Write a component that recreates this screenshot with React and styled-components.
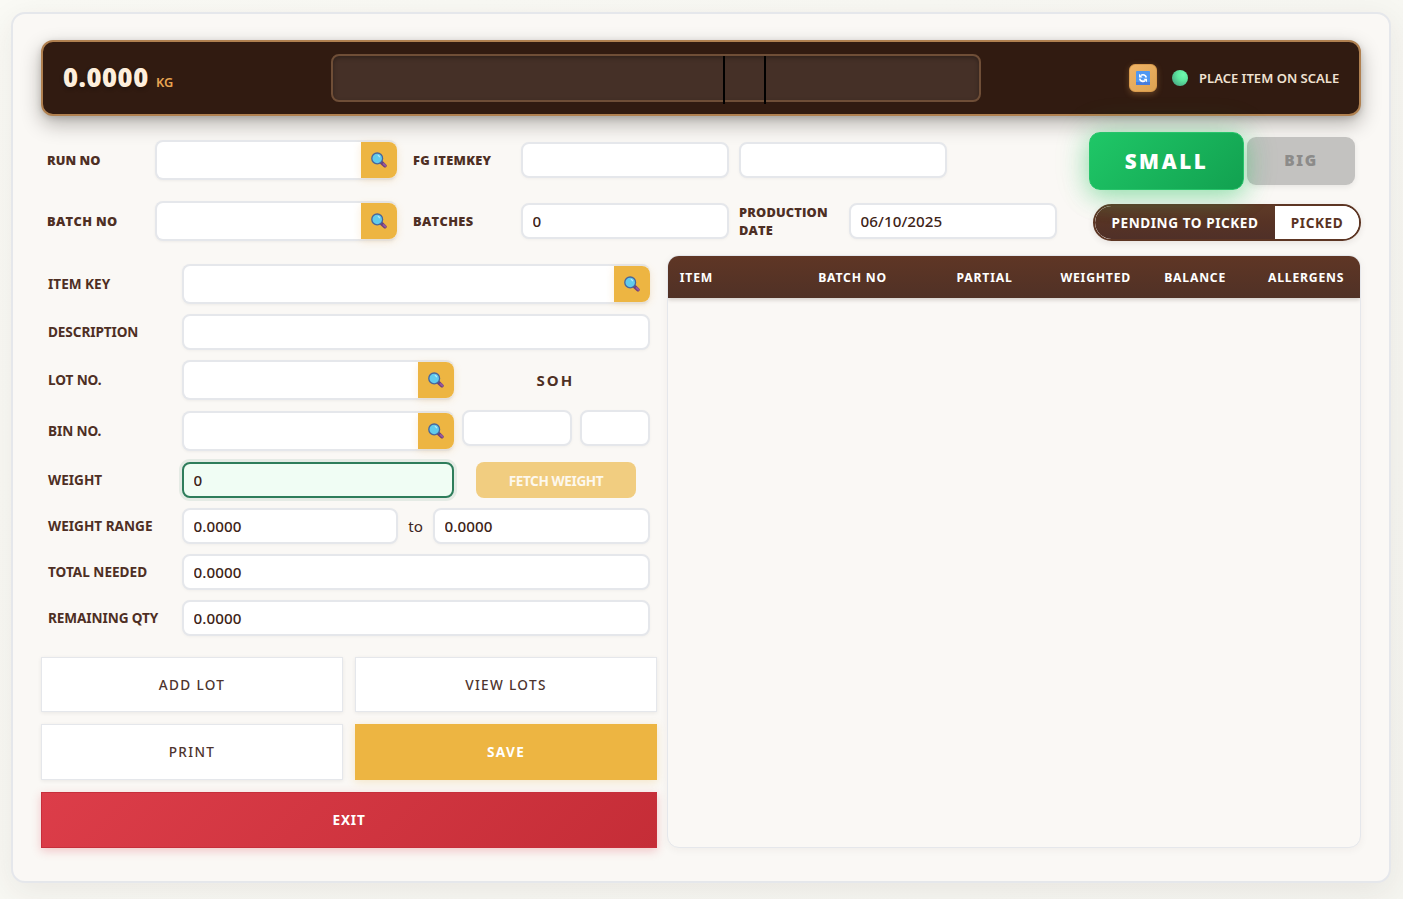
import React from "react";
import styled, { createGlobalStyle, css } from "styled-components";

const Global = createGlobalStyle`
  * { box-sizing: border-box; }
  body {
    margin: 0;
    min-height: 899px;
    overflow: hidden;
    font-family: "Noto Sans", "Open Sans", sans-serif;
    color: #3e2723;
    background: linear-gradient(135deg, #fafaf5 0%, #f5f5f0 100%);
  }
  button, input { font-family: inherit; }
`;

const Card = styled.main`
  width: 1380px;
  height: 871px;
  margin: 12px 12px 16px 11px;
  padding: 26px 28px;
  border: 2px solid #e5e7eb;
  border-radius: 14px;
  background: #faf8f5;
  box-shadow: 0 8px 32px rgba(62, 39, 35, 0.08);
  display: flex;
  flex-direction: column;
`;

const ScaleHeader = styled.header`
  flex: none;
  height: 76px;
  padding: 0 20px;
  border: 2px solid #b08050;
  border-radius: 12px;
  background: #311b11;
  box-shadow: 0 8px 20px rgba(20, 12, 8, 0.3), 0 2px 6px rgba(20, 12, 8, 0.15);
  display: flex;
  align-items: center;
`;

const Reading = styled.div`
  width: 268px;
  display: flex;
  align-items: baseline;
  gap: 8px;
`;

const ReadingValue = styled.span`
  width: 85px;
  font-family: "Open Sans", "Noto Sans", sans-serif;
  font-size: 25.6px;
  line-height: 32px;
  font-weight: 800;
  letter-spacing: 0.55px;
  color: #fdeedc;
  text-shadow: 0 2px 4px rgba(0, 0, 0, 0.3);
`;

const ReadingUnit = styled.span`
  font-size: 12.8px;
  font-weight: 600;
  color: #e9a552;
`;

const Meter = styled.div`
  position: relative;
  width: 650px;
  height: 48px;
  border: 2px solid #6f4e37;
  border-radius: 8px;
  background: #453027;
  box-shadow: inset 0 2px 4px rgba(0, 0, 0, 0.3);
`;

const Marker = styled.i`
  position: absolute;
  top: 0;
  left: ${(p) => p.$left}px;
  width: 2px;
  height: 48px;
  background: #000;
`;

const Status = styled.div`
  margin-left: auto;
  display: flex;
  align-items: center;
`;

const RefreshButton = styled.button`
  width: 28px;
  height: 28px;
  padding: 0;
  border: 1px solid #d99b4d;
  border-radius: 6px;
  background: linear-gradient(135deg, #f0b467, #dca352);
  box-shadow: 0 2px 6px rgba(233, 165, 82, 0.3);
  display: grid;
  place-items: center;
`;

const Dot = styled.span`
  width: 16px;
  height: 16px;
  margin: 0 11px 0 15px;
  border-radius: 50%;
  background: radial-gradient(circle at 70% 30%, #6ffbae 0%, #5ee9a0 35%, #41927a 100%);
`;

const StatusText = styled.span`
  width: 140px;
  font-size: 13px;
  font-weight: 600;
  color: #f0e2d2;
  letter-spacing: 0.02px;
  white-space: nowrap;
`;

const RunSection = styled.section`
  flex: none;
  height: 101px;
  margin-top: 24px;
  padding-left: 6px;
  display: flex;
  justify-content: space-between;
`;

const RunRows = styled.div`
  display: flex;
  flex-direction: column;
  gap: 21px;
`;

const RunRow = styled.div`
  height: 40px;
  display: flex;
  align-items: center;
`;

const RunLabel = styled.label`
  width: ${(p) => p.$w || 108}px;
  margin-left: ${(p) => p.$gap || 0}px;
  padding-bottom: 1px;
  font-family: "Open Sans", "Noto Sans", sans-serif;
  font-size: 12.8px;
  line-height: 18px;
  font-weight: 800;
  letter-spacing: ${(p) => p.$ls}px;
  color: #4e2f24;
`;

const Input = styled.input`
  flex: none;
  width: ${(p) => p.$w}px;
  height: 36px;
  margin-left: ${(p) => p.$gap || 0}px;
  padding: 0 10px 0 9.6px;
  border: 2px solid #e5e7eb;
  border-radius: 8px;
  outline: none;
  background: #fff;
  box-shadow: 0 1px 3px rgba(0, 0, 0, 0.04);
  font-size: 15.2px;
  font-weight: 500;
  letter-spacing: 0.05px;
  color: #3e2417;
  ${(p) => p.$active && css`
    border-color: #2e7d5b;
    background: #f0fdf4;
    box-shadow: 0 0 0 3px rgba(46, 125, 91, 0.1);
  `}
`;

const LookupBox = styled.div`
  flex: none;
  width: ${(p) => p.$w}px;
  height: 40px;
  border: 2px solid #e5e7eb;
  border-right: 0;
  border-radius: 8px;
  background: #fff;
  box-shadow: 0 1px 3px rgba(0, 0, 0, 0.05);
  display: flex;
`;

const LookupInput = styled.input`
  flex: 1;
  min-width: 0;
  padding: 0 10px;
  border: 0;
  border-radius: 8px;
  outline: none;
  background: transparent;
`;

const LookupButton = styled.button`
  flex: none;
  width: 36px;
  height: 36px;
  padding: 0 1px 1px 0;
  border: 0;
  border-radius: 0 8px 8px 0;
  background: #edb542;
  box-shadow: 0 2px 8px rgba(237, 165, 66, 0.2);
  display: grid;
  place-items: center;
`;

const Controls = styled.div`
  display: flex;
  flex-direction: column;
  justify-content: space-between;
  align-items: flex-end;
`;

const SizeRow = styled.div`
  height: 41px;
  padding-right: 6px;
  display: flex;
  align-items: center;
  gap: 3px;
`;

const SizeButton = styled.button`
  flex: none;
  padding: 0;
  border: 2px solid transparent;
  ${(p) => p.$active ? css`
    position: relative;
    width: 155px;
    height: 58px;
    border: 1px solid #28c46b;
    border-radius: 11px;
    background: linear-gradient(135deg, #1fc767, #12a150);
    box-shadow: 0 6px 24px rgba(34, 197, 94, 0.4), 0 0 36px rgba(34, 197, 94, 0.2);
    font-size: 20.6px;
    font-weight: 900;
    letter-spacing: 2.6px;
    color: #fff;
  ` : css`
    width: 108px;
    height: 48px;
    padding-bottom: 1px;
    border-radius: 9px;
    background: #c3c2c0;
    box-shadow: 0 2px 6px rgba(0, 0, 0, 0.08);
    font-size: 15.5px;
    font-weight: 900;
    letter-spacing: 1.6px;
    color: #8c8b8a;
  `}
`;

const Toggle = styled.div`
  width: 268px;
  height: 37px;
  border: 2px solid #5d3624;
  border-radius: 19px;
  overflow: hidden;
  background: #fff;
  box-shadow: 0 2px 6px rgba(62, 39, 35, 0.1);
  display: flex;
`;

const ToggleOption = styled.button`
  width: ${(p) => p.$w}px;
  padding: 0;
  border: 0;
  font-size: 13.6px;
  font-weight: 700;
  letter-spacing: 0.55px;
  color: ${(p) => (p.$active ? "#fff" : "#5a3323")};
  background: ${(p) => (p.$active ? "linear-gradient(180deg, #5e3a27, #573325 50%, #4f3028)" : "#fff")};
  ${(p) => p.$active && "border-radius: 17px 0 0 17px;"}
`;

const Workspace = styled.section`
  margin-top: 14px;
  display: grid;
  grid-template-columns: 616px 694px;
  gap: 10px;
`;

const Form = styled.div`
  padding: 9px 7px 0;
  display: flex;
  flex-direction: column;
  gap: 10px;
`;

const FormRow = styled.div`
  height: ${(p) => p.$h || 36}px;
  display: flex;
  align-items: center;
`;

const FormLabel = styled.label`
  flex: none;
  width: 134px;
  padding-bottom: 1px;
  font-size: 13.6px;
  font-weight: 700;
  letter-spacing: ${(p) => p.$ls ?? 0}px;
  color: #4e2f24;
`;

const StockLabel = styled.span`
  margin-left: 82.5px;
  padding-bottom: 1px;
  font-size: 15px;
  font-weight: 700;
  letter-spacing: 2px;
  color: #4e2f24;
`;

const StockFields = styled.div`
  align-self: flex-start;
  display: flex;
`;

const FetchButton = styled.button`
  width: 160px;
  height: 36px;
  margin-left: 22px;
  padding: 1px 0 0;
  border: 0;
  border-radius: 8px;
  background: #f1cd80;
  font-size: 13.6px;
  font-weight: 700;
  letter-spacing: -0.4px;
  color: #fdf8ee;
`;

const RangeWord = styled.span`
  width: 35px;
  padding-bottom: 1px;
  text-align: center;
  font-size: 15.2px;
`;

const Actions = styled.div`
  margin-top: 21px;
  display: grid;
  grid-template-columns: 302px 302px;
  grid-template-rows: 55px 56px 56px;
  gap: 12px;
`;

const actionKinds = {
  plain: css`
    border: 1px solid #e5e7eb;
    background: #fff;
    color: #4e342e;
    font-weight: 500;
    box-shadow: 0 1px 4px rgba(0, 0, 0, 0.07);
  `,
  save: css`
    border: 0;
    background: #edb542;
    color: #fff;
    font-weight: 700;
    box-shadow: 0 2px 8px rgba(237, 181, 66, 0.25);
  `,
  exit: css`
    grid-column: 1 / 3;
    border: 1px solid #c62f3b;
    background: linear-gradient(135deg, #dc3d49, #c52d37);
    color: #fff;
    font-weight: 700;
    box-shadow: 0 3px 9px rgba(220, 53, 69, 0.25);
  `,
};

const ActionButton = styled.button`
  padding: 0 0 1px;
  font-size: 13.6px;
  letter-spacing: ${(p) => (p.$kind === "exit" ? 0.8 : 1.35)}px;
  ${(p) => actionKinds[p.$kind || "plain"]}
`;

const TablePanel = styled.div`
  height: 593px;
  border: 1px solid #e5e7eb;
  border-radius: 12px;
  overflow: hidden;
  background: #faf8f5;
  box-shadow: 0 2px 8px rgba(62, 39, 35, 0.05);
`;

const TableHead = styled.div`
  height: 42px;
  display: grid;
  grid-template-columns: 20% 20% 15% 15% 15% 15%;
  align-items: center;
  background: linear-gradient(180deg, #5f3625, #503126);
  box-shadow: 0 2px 4px rgba(62, 39, 35, 0.2);
`;

const HeadCell = styled.span`
  padding-left: 11.8px;
  font-size: 12.2px;
  font-weight: 700;
  letter-spacing: 0.8px;
  color: #fff;
  white-space: nowrap;
`;

const SearchIcon = () => (
  <svg width="16" height="16" viewBox="0 0 16 16">
    <path d="M10.6 10.6 13.9 13.7" stroke="#6d3f79" strokeWidth="3.6" strokeLinecap="round" />
    <path d="M12.6 12 14.3 13.6" stroke="#9558a0" strokeWidth="2" strokeLinecap="round" />
    <circle cx="6.2" cy="6.4" r="5.4" fill="#61cbec" stroke="#48659b" strokeWidth="1.3" />
    <path d="M7.2 3.6a3 3 0 0 1 1.4 1.2" fill="none" stroke="#b7eafa" strokeWidth="1.1" strokeLinecap="round" />
  </svg>
);

const RefreshIcon = () => (
  <svg width="14" height="14" viewBox="0 0 14 14">
    <rect width="14" height="14" rx="0.8" fill="#4f98f2" />
    <path d="M0 11h14v3H0z" fill="#467dde" />
    <path d="M5 4.3C7 3.2 9.8 3.8 10.3 6.5M9 9.8C7 10.9 4.2 10.3 3.7 7.6" fill="none" stroke="#fff" strokeWidth="1.7" />
    <path d="M3 2.8v3.6h3.6zM11 11.3V7.7H7.4z" fill="#fff" />
  </svg>
);

const Lookup = ({ width }) => (
  <LookupBox $w={width}>
    <LookupInput />
    <LookupButton><SearchIcon /></LookupButton>
  </LookupBox>
);

const columns = ["ITEM", "BATCH NO", "PARTIAL", "WEIGHTED", "BALANCE", "ALLERGENS"];

export default function App() {
  return (
    <>
      <Global />
      <Card>
        <ScaleHeader>
          <Reading>
            <ReadingValue>0.0000</ReadingValue>
            <ReadingUnit>KG</ReadingUnit>
          </Reading>
          <Meter>
            <Marker $left={390} />
            <Marker $left={431} />
          </Meter>
          <Status>
            <RefreshButton><RefreshIcon /></RefreshButton>
            <Dot />
            <StatusText>PLACE ITEM ON SCALE</StatusText>
          </Status>
        </ScaleHeader>

        <RunSection>
          <RunRows>
            <RunRow>
              <RunLabel $ls={0.05}>RUN NO</RunLabel>
              <Lookup width={242} />
              <RunLabel $gap={16} $ls={0.3}>FG ITEMKEY</RunLabel>
              <Input $w={208} />
              <Input $w={208} $gap={10} />
            </RunRow>
            <RunRow>
              <RunLabel $ls={0.35}>BATCH NO</RunLabel>
              <Lookup width={242} />
              <RunLabel $gap={16} $ls={0.35}>BATCHES</RunLabel>
              <Input $w={208} defaultValue="0" />
              <RunLabel $gap={10} $w={110} $ls={0.15}>PRODUCTION DATE</RunLabel>
              <Input $w={208} defaultValue="06/10/2025" />
            </RunRow>
          </RunRows>
          <Controls>
            <SizeRow>
              <SizeButton $active>SMALL</SizeButton>
              <SizeButton>BIG</SizeButton>
            </SizeRow>
            <Toggle>
              <ToggleOption $active $w={180}>PENDING TO PICKED</ToggleOption>
              <ToggleOption $w={84}>PICKED</ToggleOption>
            </Toggle>
          </Controls>
        </RunSection>

        <Workspace>
          <div>
            <Form>
              <FormRow $h={40}>
                <FormLabel>ITEM KEY</FormLabel>
                <Lookup width={468} />
              </FormRow>
              <FormRow>
                <FormLabel $ls={-0.1}>DESCRIPTION</FormLabel>
                <Input $w={468} />
              </FormRow>
              <FormRow $h={40}>
                <FormLabel $ls={-0.1}>LOT NO.</FormLabel>
                <Lookup width={272} />
                <StockLabel>SOH</StockLabel>
              </FormRow>
              <FormRow $h={42}>
                <FormLabel $ls={-0.1}>BIN NO.</FormLabel>
                <Lookup width={272} />
                <StockFields>
                  <Input $w={110} $gap={8} />
                  <Input $w={70} $gap={8} />
                </StockFields>
              </FormRow>
              <FormRow>
                <FormLabel>WEIGHT</FormLabel>
                <Input $w={272} $active defaultValue="0" />
                <FetchButton>FETCH WEIGHT</FetchButton>
              </FormRow>
              <FormRow>
                <FormLabel>WEIGHT RANGE</FormLabel>
                <Input $w={216} defaultValue="0.0000" />
                <RangeWord>to</RangeWord>
                <Input $w={217} defaultValue="0.0000" />
              </FormRow>
              <FormRow>
                <FormLabel>TOTAL NEEDED</FormLabel>
                <Input $w={468} defaultValue="0.0000" />
              </FormRow>
              <FormRow>
                <FormLabel $ls={-0.1}>REMAINING QTY</FormLabel>
                <Input $w={468} defaultValue="0.0000" />
              </FormRow>
            </Form>
            <Actions>
              <ActionButton>ADD LOT</ActionButton>
              <ActionButton>VIEW LOTS</ActionButton>
              <ActionButton>PRINT</ActionButton>
              <ActionButton $kind="save">SAVE</ActionButton>
              <ActionButton $kind="exit">EXIT</ActionButton>
            </Actions>
          </div>
          <TablePanel>
            <TableHead>
              {columns.map((name) => <HeadCell key={name}>{name}</HeadCell>)}
            </TableHead>
          </TablePanel>
        </Workspace>
      </Card>
    </>
  );
}
